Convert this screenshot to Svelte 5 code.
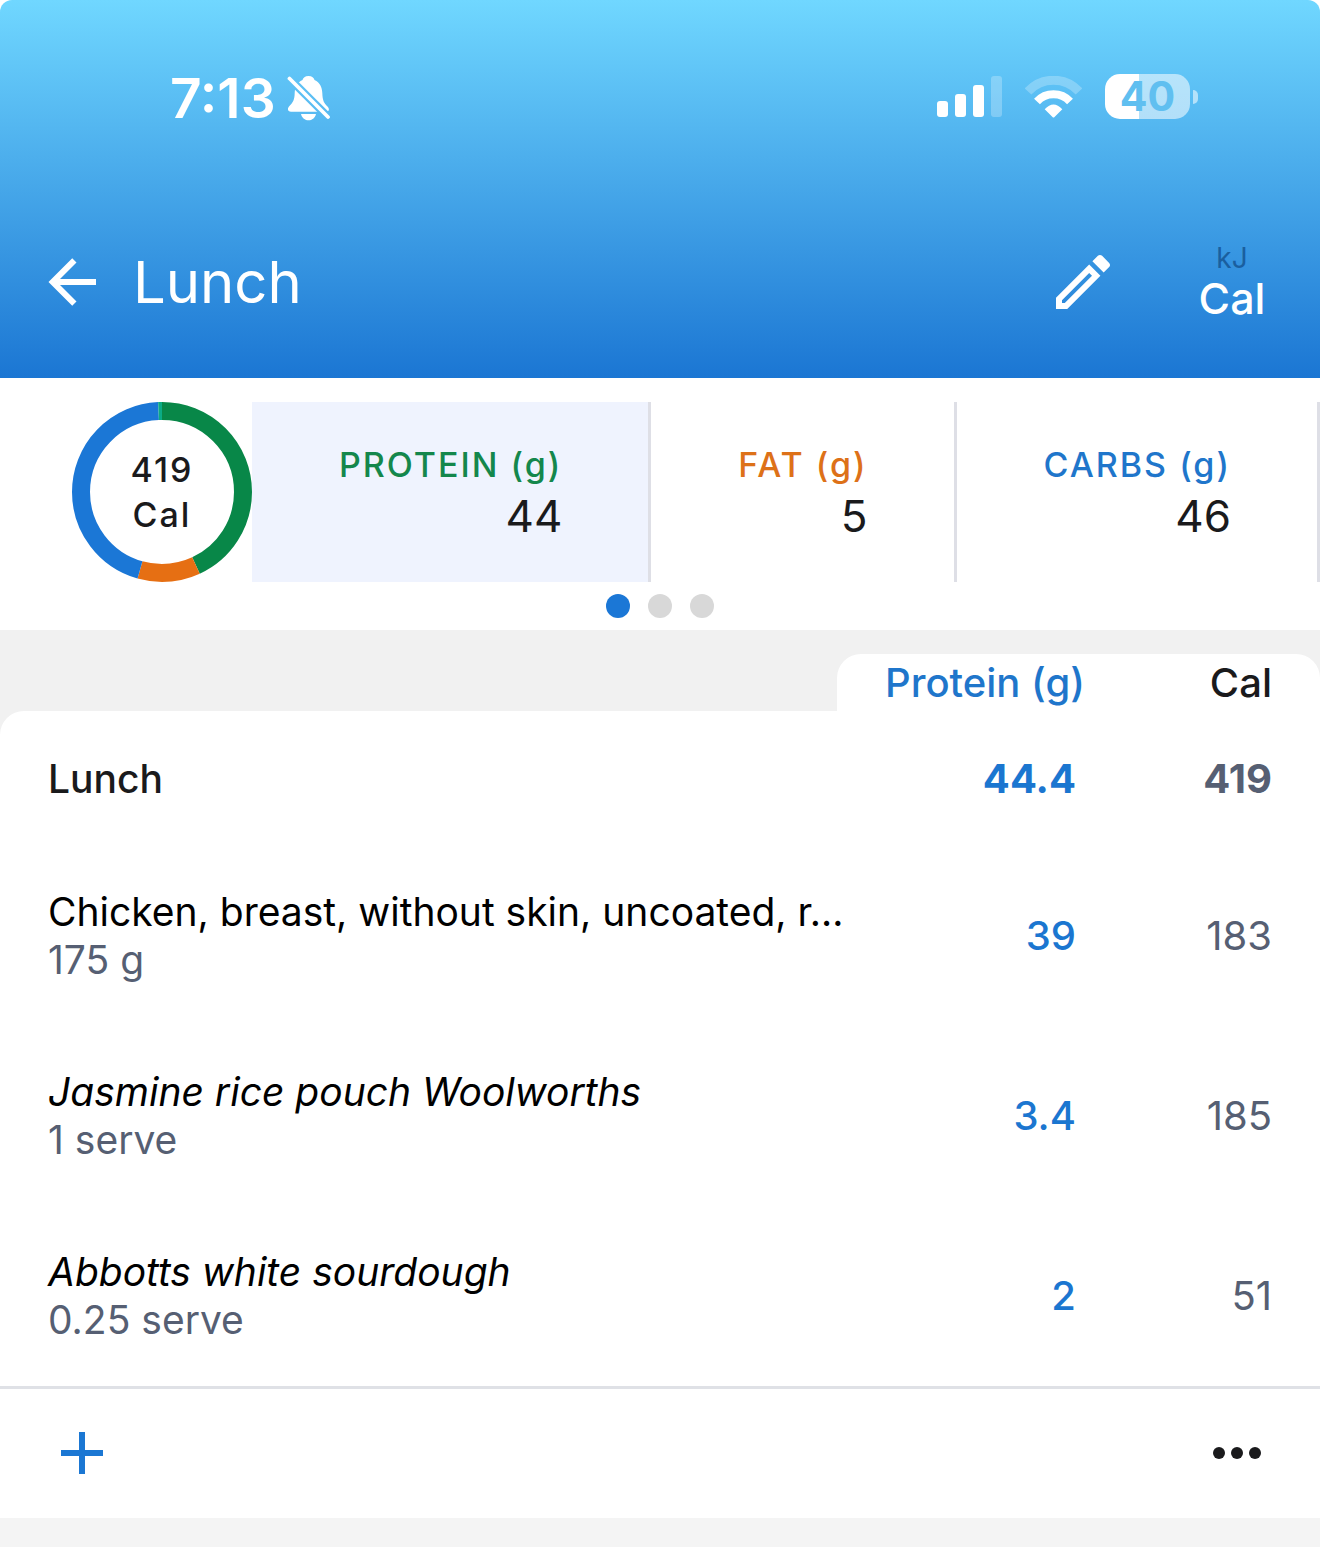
<script lang="ts">
  type Nutrient = { label: string; value: number; tone: string };
  type Food = { name: string; amount: string; protein: number; cal: number; custom: boolean };

  const nutrients: Nutrient[] = [
    { label: 'PROTEIN (g)', value: 44, tone: 'protein' },
    { label: 'FAT (g)', value: 5, tone: 'fat' },
    { label: 'CARBS (g)', value: 46, tone: 'carbs' }
  ];

  const foods: Food[] = [
    { name: 'Chicken, breast, without skin, uncoated, r…', amount: '175 g', protein: 39, cal: 183, custom: false },
    { name: 'Jasmine rice pouch Woolworths', amount: '1 serve', protein: 3.4, cal: 185, custom: true },
    { name: 'Abbotts white sourdough', amount: '0.25 serve', protein: 2, cal: 51, custom: true }
  ];

  // share of the ring, in percent, clockwise from the top
  const shares = [
    { color: '#088748', start: 0, size: 43.1 },
    { color: '#e66f13', start: 43.1, size: 11.3 },
    { color: '#1b77d6', start: 54.4, size: 44.9 },
    { color: '#0bab85', start: 99.3, size: 0.7 }
  ];

  let selected = $state(0);
  let page = $state(0);
</script>

<div class="screen">
  <header class="top">
    <div class="status">
      <div class="clock">
        <span>7:13</span>
        <svg width="44" height="46" viewBox="0 0 44 46" aria-hidden="true">
          <mask id="bell-cut">
            <rect width="44" height="46" fill="#fff" />
            <path d="M-1 0 L45 46" stroke="#000" stroke-width="8" />
          </mask>
          <g fill="#fff" mask="url(#bell-cut)">
            <path d="M21.5 1C25 1 27 3 27.5 5C33 7.500 35 12 35.300 18C35.600 26 37 28 40.500 31.500C43 34.500 42 36.700 39 36.700H4C1 36.700 0 34 2 31.500C6 27.500 7.500 25 7.700 18C8 12 10 7.500 15.500 5C16 3 18 1 21.500 1Z" />
            <path d="M14 39H29C28 43 25 45.300 21.500 45.300S15 43 14 39Z" />
          </g>
          <path d="M2.500 3.500L41 42" stroke="#fff" stroke-width="3.800" stroke-linecap="round" />
        </svg>
      </div>
      <div class="signals">
        <svg width="65" height="41" viewBox="0 0 65 41" fill="#fff" aria-hidden="true">
          <rect x="0" y="25" width="11" height="16" rx="3" />
          <rect x="18" y="18" width="11" height="23" rx="3" />
          <rect x="36" y="9" width="11" height="32" rx="3" />
          <rect x="54" y="0" width="11" height="41" rx="3" opacity="0.25" />
        </svg>
        <svg width="57" height="42" viewBox="0 0 57 42" fill="none" stroke="#fff" aria-hidden="true">
          <path d="M3 15.500A34.500 34.500 0 0 1 54 15.500" stroke-width="9" opacity="0.25" />
          <path d="M12 25.500A22.500 22.500 0 0 1 45 25.500" stroke-width="8" />
          <path d="M19.700 33.300Q28.500 23.500 37.300 33.300L29.500 41Q28.500 42 27.500 41Z" fill="#fff" stroke="none" />
        </svg>
        <div class="battery"><span>40</span></div>
      </div>
    </div>

    <div class="toolbar">
      <button type="button" class="icon-btn" aria-label="Back">
        <svg width="72" height="72" viewBox="0 0 24 24" fill="#fff">
          <path d="M20 11V13H8L13.500 18.500L12.080 19.920L4.160 12L12.080 4.080L13.500 5.500L8 11H20Z" />
        </svg>
      </button>
      <h1>Lunch</h1>
      <button type="button" class="icon-btn" aria-label="Edit">
        <svg width="72" height="72" viewBox="0 0 24 24" fill="#fff">
          <path d="M14.060 9L15 9.940L5.920 19H5V18.080L14.060 9M17.660 3C17.410 3 17.150 3.100 16.960 3.290L15.130 5.120L18.880 8.870L20.710 7.040C21.100 6.650 21.100 6 20.710 5.630L18.370 3.290C18.170 3.090 17.920 3 17.660 3M14.060 6.190L3 17.250V21H6.750L17.810 9.940L14.060 6.190Z" />
        </svg>
      </button>
      <button type="button" class="unit-btn">
        <span class="unit-off">kJ</span>
        <span class="unit-on">Cal</span>
      </button>
    </div>
  </header>

  <section class="summary">
    <div class="strip">
      <div class="ring">
        <svg width="180" height="180" viewBox="0 0 180 180" fill="none" aria-hidden="true">
          <g transform="rotate(-90 90 90)">
            {#each shares as s (s.color)}
              <circle cx="90" cy="90" r="81" pathLength="100" stroke={s.color} stroke-width="18"
                stroke-dasharray="{s.size} {100 - s.size}" stroke-dashoffset={-s.start} />
            {/each}
          </g>
        </svg>
        <div class="ring-text">419<br />Cal</div>
      </div>
      {#each nutrients as n, i (n.label)}
        <button type="button" class="nutrient {n.tone}" class:active={selected === i} onclick={() => (selected = i)}>
          <span class="nutrient-label">{n.label}</span>
          <span class="nutrient-value">{n.value}</span>
        </button>
      {/each}
    </div>
    <div class="pager">
      {#each [0, 1, 2] as p (p)}
        <button type="button" class="dot" class:current={page === p} aria-label="Page {p + 1}" onclick={() => (page = p)}></button>
      {/each}
    </div>
  </section>

  <table class="foods">
    <colgroup>
      <col />
      <col class="col-protein" />
      <col class="col-cal" />
    </colgroup>
    <thead>
      <tr>
        <td></td>
        <th scope="col" class="tab-start">Protein (g)</th>
        <th scope="col" class="tab-end">Cal</th>
      </tr>
    </thead>
    <tbody>
      <tr class="total">
        <th scope="row">Lunch</th>
        <td class="num-protein">44.4</td>
        <td class="num-cal">419</td>
      </tr>
      {#each foods as food (food.name)}
        <tr class="food">
          <th scope="row">
            <div class="name" class:custom={food.custom}>{food.name}</div>
            <div class="amount">{food.amount}</div>
          </th>
          <td class="num-protein">{food.protein}</td>
          <td class="num-cal">{food.cal}</td>
        </tr>
      {/each}
    </tbody>
  </table>

  <footer class="actions">
    <button type="button" class="icon-btn" aria-label="Add food">
      <svg width="72" height="72" viewBox="0 0 24 24" fill="#1b77d3">
        <path d="M19 13H13V19H11V13H5V11H11V5H13V11H19Z" />
      </svg>
    </button>
    <button type="button" class="icon-btn" aria-label="More">
      <svg width="72" height="72" viewBox="0 0 24 24" fill="#1a1a1c">
        <circle cx="6" cy="12" r="2" />
        <circle cx="12" cy="12" r="2" />
        <circle cx="18" cy="12" r="2" />
      </svg>
    </button>
  </footer>
</div>

<style>
  :global(body) {
    background: #f4f4f4;
  }

  .screen {
    background: #fff;
    font-family: Inter, 'Liberation Sans', sans-serif;
    font-size: 40px;
    line-height: 48px;
    color: #1a1a1c;
  }

  button {
    padding: 0;
    border: none;
    background: none;
    font: inherit;
    color: inherit;
    cursor: pointer;
  }

  svg {
    display: block;
  }

  .top {
    border-radius: 12px 12px 0 0;
    background: linear-gradient(#70d7ff, #1b76d3);
    color: #fff;
  }

  .status {
    display: flex;
    justify-content: space-between;
    align-items: center;
    height: 193px;
    padding: 0 122px 0 170px;
    box-sizing: border-box;
  }

  .clock {
    display: flex;
    align-items: center;
    gap: 11px;
    padding-top: 3px;
    font-size: 55px;
    font-weight: 600;
  }

  .signals {
    display: flex;
    align-items: center;
    gap: 23px;
  }

  .battery {
    position: relative;
    width: 85px;
    height: 45px;
    margin-right: 8px;
    border-radius: 15px;
    background: linear-gradient(to right, #fff 40%, rgba(255, 255, 255, 0.55) 40%);
    color: #60bff0;
    font-size: 41px;
    font-weight: 700;
    line-height: 45px;
    text-align: center;
  }
  .battery::after {
    content: '';
    position: absolute;
    top: 16px;
    right: -8px;
    width: 5px;
    height: 14px;
    border-radius: 0 5px 5px 0;
    background: rgba(255, 255, 255, 0.55);
  }

  .toolbar {
    display: flex;
    align-items: center;
    height: 185px;
    padding: 0 44px 7px 36px;
    box-sizing: border-box;
  }

  h1 {
    flex: 1;
    margin: 0 0 0 25px;
    font-size: 58px;
    font-weight: 400;
    line-height: 72px;
  }

  .unit-btn {
    display: flex;
    flex-direction: column;
    align-items: center;
    width: 88px;
    margin-left: 69px;
  }
  .unit-off {
    color: #1a5f9f;
    font-size: 28px;
    line-height: 32px;
  }
  .unit-on {
    font-size: 43px;
    font-weight: 500;
    line-height: 48px;
  }

  .summary {
    padding: 24px 0 12px;
  }

  .strip {
    display: flex;
    padding-left: 72px;
    overflow: hidden;
  }

  .ring {
    flex: none;
    display: grid;
    place-items: center;
  }
  .ring > * {
    grid-area: 1 / 1;
  }
  .ring-text {
    font-size: 34px;
    font-weight: 500;
    line-height: 45px;
    letter-spacing: 2px;
    text-align: center;
  }

  .nutrient {
    flex: 1 0 auto;
    display: flex;
    flex-direction: column;
    align-items: flex-end;
    justify-content: center;
    padding: 0 86px;
    border-right: 3px solid #dedfe6;
  }
  .nutrient.active {
    background: #eff3fe;
  }
  .nutrient-label {
    font-size: 34px;
    font-weight: 500;
    letter-spacing: 2px;
    line-height: 48px;
  }
  .nutrient-value {
    font-size: 44px;
    line-height: 54px;
  }
  .protein .nutrient-label {
    color: #14874c;
  }
  .fat .nutrient-label {
    color: #dd7118;
  }
  .carbs .nutrient-label {
    color: #1f76cb;
  }

  .pager {
    display: flex;
    justify-content: center;
    gap: 18px;
    padding-top: 12px;
  }
  .dot {
    width: 24px;
    height: 24px;
    border-radius: 50%;
    background: #d8d8d8;
  }
  .dot.current {
    background: #1b77d6;
  }

  .foods {
    width: 100%;
    padding-top: 24px;
    border-spacing: 0;
    table-layout: fixed;
    background: #f1f1f1;
    text-align: right;
  }
  .col-protein {
    width: 283px;
  }
  .col-cal {
    width: 200px;
  }

  th,
  td {
    padding: 0;
    font-weight: 400;
  }

  thead th {
    height: 57px;
    background: #fff;
    font-weight: 500;
  }
  .tab-start {
    padding-right: 35px;
    border-top-left-radius: 24px;
    color: #1f76cb;
  }
  .tab-end {
    padding-right: 48px;
    border-top-right-radius: 24px;
  }

  tbody th,
  tbody td {
    background: #fff;
  }
  tbody th {
    padding-left: 48px;
    font-size: 39px;
    text-align: left;
    white-space: nowrap;
  }

  .total > * {
    height: 135px;
    font-weight: 700;
  }
  .total th {
    border-top-left-radius: 24px;
    font-weight: 500;
  }

  .food > * {
    height: 180px;
  }
  .name {
    color: #000;
  }
  .name.custom {
    font-style: italic;
  }
  .amount {
    color: #565f73;
  }

  .num-protein {
    padding-right: 44px;
    color: #1b76d0;
  }
  .food .num-protein {
    font-weight: 500;
  }
  .num-cal {
    padding-right: 48px;
    color: #565f73;
  }

  .actions {
    display: flex;
    justify-content: space-between;
    padding: 28px 47px 29px 46px;
    border-top: 3px solid #dfe1e6;
  }
</style>
